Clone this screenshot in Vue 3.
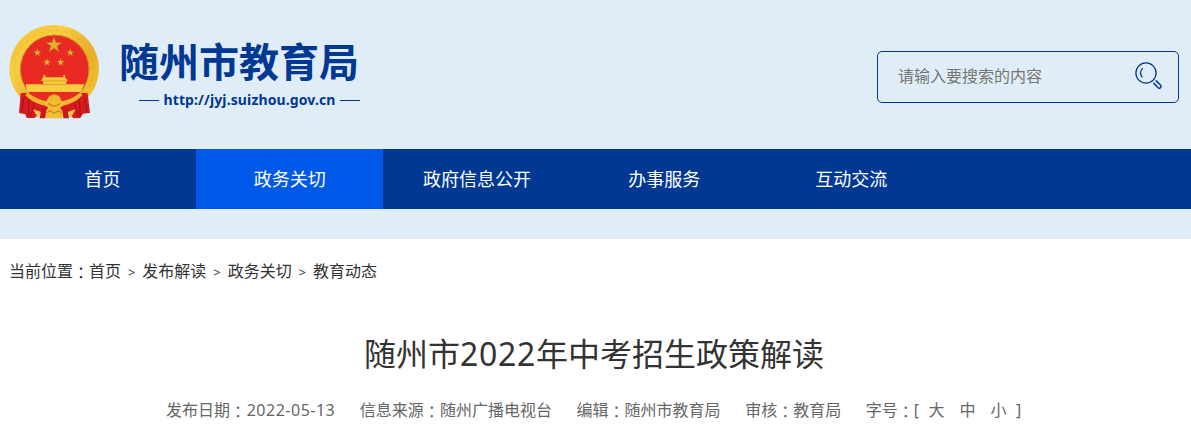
<script setup>
const nav = [
  { label: '首页' },
  { label: '政务关切', active: true },
  { label: '政府信息公开' },
  { label: '办事服务' },
  { label: '互动交流' },
]
const crumbs = ['首页', '发布解读', '政务关切', '教育动态']
const meta = [
  { key: '发布日期', value: '2022-05-13', date: true },
  { key: '信息来源', value: '随州广播电视台' },
  { key: '编辑', value: '随州市教育局' },
  { key: '审核', value: '教育局' },
]
const sizes = ['大', '中', '小']
const star = 'M0-10 2.4-3.1 9.5-3.1 3.8 1.2 5.9 8.1 0 4 -5.9 8.1 -3.8 1.2 -9.5-3.1 -2.4-3.1Z'
const stars = [
  { x: 162, y: 87, s: 2.5 },
  { x: 112, y: 110, s: 1.2 },
  { x: 211, y: 110, s: 1.2 },
  { x: 141, y: 139, s: 1.2 },
  { x: 182, y: 139, s: 1.2 },
]
</script>

<template>
  <div class="page">
    <header class="header">
      <div class="brand">
        <svg class="emblem" viewBox="27 24 273 288">
          <defs>
            <linearGradient id="gold" x1="0" y1="0" x2="1" y2="1">
              <stop offset="0" stop-color="#f2bd2c" />
              <stop offset=".3" stop-color="#f8cf42" />
              <stop offset=".6" stop-color="#e9ae2a" />
              <stop offset="1" stop-color="#f6c833" />
            </linearGradient>
          </defs>
          <ellipse cx="162.5" cy="158" rx="134.5" ry="131" fill="url(#gold)" />
          <ellipse cx="162.5" cy="158" rx="118" ry="115" fill="none" stroke="#d99a20" stroke-width="5" stroke-dasharray="9 15" opacity=".25" />
          <path d="M62 232 79 230 126 262 199 262 246 230 263 232 270 291 249 293 241 306 221 307 204 292 121 292 103 306 80 306 76 295 57 291Z" fill="#d61c1f" />
          <path d="M72 245 65 288M87 249 85 301M103 260 91 302M253 245 261 288M238 249 241 300M222 260 235 302" stroke="#b01218" stroke-width="4" fill="none" />
          <circle cx="164" cy="160" r="103" fill="#e92a22" stroke="#c99022" stroke-width="3" />
          <path v-for="(s, i) in stars" :key="i" :d="star" :transform="`translate(${s.x} ${s.y}) scale(${s.s})`" fill="#e5ae32" stroke="#ae7420" stroke-width=".6" />
          <path d="M77 205H253Q248 217 241 228H84Q78 217 77 205Z" fill="#f9cd42" />
          <path d="M130 184V177H136V184H190V177H195V184L204 194H199V205H129V194H122Z" fill="#f8ca3d" />
          <path d="M127 195H199M123 206H203" stroke="#d99420" stroke-width="2" />
          <path d="M84 229H241Q229 250 203 262H123Q99 250 84 229Z" fill="#e92a22" />
          <path d="M83 229Q108 250 139 256L148 240 162 234 177 240 186 256Q218 250 242 229L247 238Q225 262 188 270L176 277H149L137 270Q98 262 76 238Z" fill="#efb52e" />
          <path d="M135 267 147 246 155 253 162 246 170 253 178 246 191 267 180 275 192 291 186 307H139L132 291 145 275Z" fill="#f3be32" />
          <path d="M145 262Q162 278 180 262" fill="none" stroke="#d98a20" stroke-width="5" />
          <path d="M99 280 126 289 114 305ZM227 280 200 289 213 305Z" fill="#f4c64b" />
          <path d="M124 278 139 272 136 307H119ZM202 278 187 272 190 307H207Z" fill="#c9181d" />
          <path d="M139 291 150 284 162 292 175 284 187 291" fill="none" stroke="#cd8b1e" stroke-width="4" />
        </svg>
        <div class="names">
          <div class="name">随州市教育局</div>
          <div class="url"><i></i><span>http://jyj.suizhou.gov.cn</span><i></i></div>
        </div>
      </div>
      <div class="search">
        <span>请输入要搜索的内容</span>
        <svg class="glass" viewBox="0 0 28 28" fill="none" stroke="#003893" stroke-linecap="round">
          <circle cx="11" cy="11" r="10.1" stroke-width="1.3" />
          <path d="M7.4 6.6Q3.8 10.6 7.1 15.1" stroke-width="1.3" />
          <path d="M18.8 21.4 23.2 25.8Q24.6 26.8 25.7 25.6Q26.6 24.4 25.7 23.3L21.2 18.9" stroke-width="1.5" />
        </svg>
      </div>
    </header>
    <nav class="nav">
      <a v-for="n in nav" :key="n.label" :class="{ active: n.active }">{{ n.label }}</a>
    </nav>
    <div class="band"></div>
    <main>
      <div class="crumbs">
        <span>当前位置<b class="colon">：</b></span>
        <template v-for="(c, i) in crumbs" :key="c">
          <span v-if="i" class="sep">&gt;</span><span>{{ c }}</span>
        </template>
      </div>
      <h1>随州市<span class="year">2022</span>年中考招生政策解读</h1>
      <div class="meta">
        <span v-for="m in meta" :key="m.key">{{ m.key }}<b class="colon">：</b><span :class="{ date: m.date }">{{ m.value }}</span></span>
        <span class="fontsize"><span>字号<b class="colon">：</b>[</span><span class="sizes"><span v-for="s in sizes" :key="s">{{ s }}</span></span><span>]</span></span>
      </div>
    </main>
  </div>
</template>

<style>
body {
  background: #fff;
}
</style>

<style scoped>
.page {
  width: 1191px;
  height: 443px;
  overflow: hidden;
  font-family: "Noto Sans", "Noto Sans CJK SC", sans-serif;
  color: #333;
  white-space: nowrap;
}
.header {
  display: flex;
  justify-content: space-between;
  height: 149px;
  box-sizing: border-box;
  padding: 23px 12px 0 9px;
  background: #e0edf6;
}
.brand {
  display: flex;
}
.emblem {
  width: 91px;
  height: 96px;
  margin-top: 1px;
}
.names {
  margin: 15px 0 0 19px;
  color: #003893;
  font-weight: 700;
}
.name {
  font-size: 40px;
  line-height: 48px;
}
.url {
  display: flex;
  align-items: center;
  margin-left: 20px;
  width: 221px;
  justify-content: space-between;
  font-size: 14px;
  line-height: 28px;
  letter-spacing: 0.12px;
}
.url i {
  width: 20px;
  height: 1px;
  background: #003893;
}
.search {
  display: flex;
  justify-content: space-between;
  box-sizing: border-box;
  width: 302px;
  height: 52px;
  margin-top: 28px;
  padding: 0 15px 0 20px;
  border: 1px solid #003893;
  border-radius: 5px;
  color: #757575;
  font-size: 16px;
  line-height: 49px;
}
.glass {
  width: 28px;
  height: 28px;
  margin-top: 10px;
}
.nav {
  display: flex;
  height: 60px;
  padding-left: 9px;
  background: #003893;
}
.nav a {
  width: 187.2px;
  color: #fff;
  font-size: 18px;
  line-height: 60px;
  text-align: center;
}
.nav a.active {
  background: #0059e8;
}
.band {
  height: 30px;
  background: #e0edf6;
}
.colon {
  position: relative;
  top: 2px;
  font-family: "Noto Sans CJK TC", sans-serif;
  font-weight: 400;
  line-height: 0;
}
.crumbs {
  display: flex;
  padding: 16px 0 0 9px;
  font-size: 16px;
  line-height: 32px;
}
.sep {
  width: 21.3px;
  font-size: 13px;
  line-height: 34px;
  height: 32px;
  text-align: center;
}
h1 {
  margin: 43px 0 0;
  padding-right: 3px;
  font-size: 32px;
  font-weight: 400;
  line-height: 48px;
  text-align: center;
}
.year {
  letter-spacing: 0.7px;
}
.meta {
  display: flex;
  gap: 24.6px;
  margin-top: 16px;
  padding-left: 166px;
  color: #666;
  font-size: 16px;
  line-height: 32px;
}
.date {
  margin-left: 0.7px;
  letter-spacing: 0.5px;
}
.fontsize {
  display: flex;
}
.sizes {
  display: flex;
  gap: 15px;
  margin: 0 9.5px;
}
</style>
